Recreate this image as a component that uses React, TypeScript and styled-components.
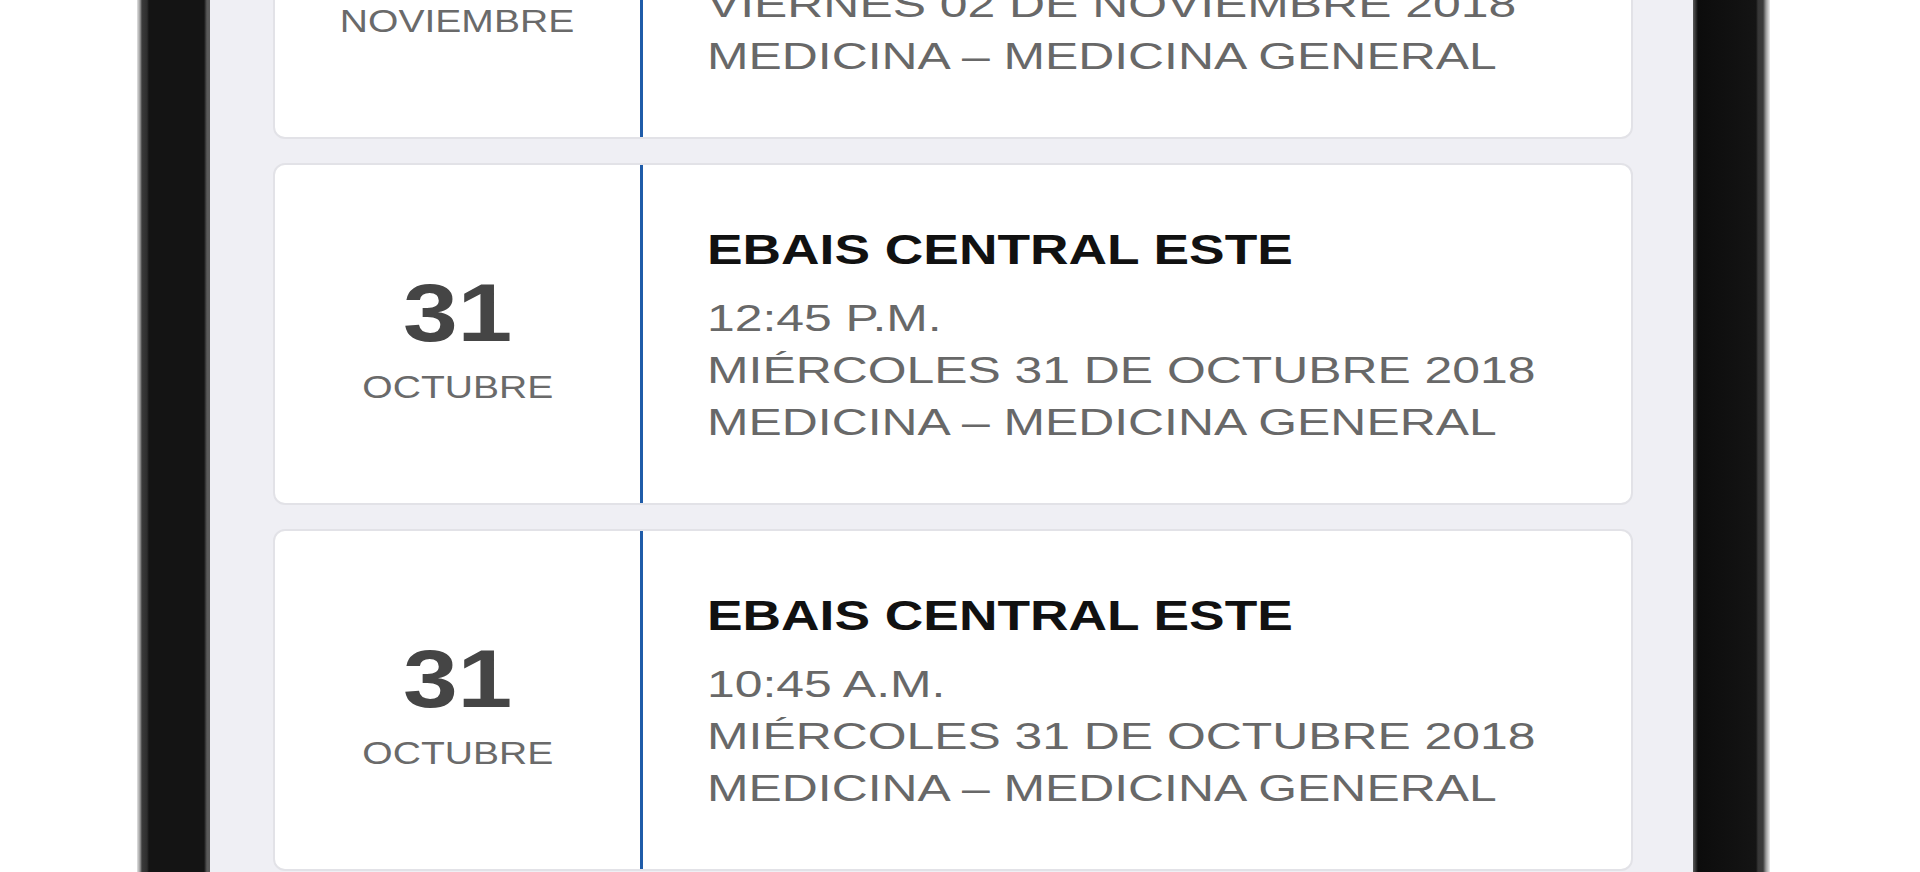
import React from 'react';
import styled, { createGlobalStyle } from 'styled-components';

const GlobalStyle = createGlobalStyle`
    html, body {
        margin: 0;
        padding: 0;
        background: #fff;
        overflow: hidden;
    }

    body {
        font-family: "Liberation Sans", Arial, sans-serif;
    }
`;

const Page = styled.div`
    height: 872px;
    overflow: hidden;
    padding-left: 137px;
    background: #fff;
`;

const Phone = styled.div`
    width: 1633px;
    height: 872px;
    box-sizing: border-box;
    display: flex;
    padding: 0 77px 0 73px;
    background: linear-gradient(to right,
        #e2e2e2 0, #9a9a9a 3px, #3a3a3a 5px, #2e2e2e 10px, #141414 12px,
        #141414 67px, #5a5a5a 70px, #5a5a5a 73px,
        #5a5a5a calc(100% - 77px), #0c0c0c calc(100% - 72px),
        #141414 calc(100% - 14px), #363636 calc(100% - 12px), #3a3a3a calc(100% - 7px),
        #9a9a9a calc(100% - 4px), #ececec 100%);
`;

const Screen = styled.div`
    flex: 1;
    background: #efeff4;
    padding: 0 60px 0 63px;
    overflow: hidden;
`;

const List = styled.div`
    display: flex;
    flex-direction: column;
    gap: 24px;
    margin-top: -203px;
`;

const Card = styled.div`
    flex: none;
    height: 342px;
    box-sizing: border-box;
    display: grid;
    grid-template-columns: 365px 1fr;
    background: #fff;
    border: 2px solid #e2e2e7;
    border-radius: 12px;
    overflow: hidden;
`;

const DateCol = styled.div`
    display: flex;
    flex-direction: column;
    align-items: center;
    justify-content: center;
    padding-top: 6px;
`;

const Day = styled.div`
    font-size: 82px;
    font-weight: 700;
    line-height: 82px;
    color: #454545;
    transform: scaleX(1.2);
`;

const Month = styled.div`
    margin-top: 18px;
    font-size: 31px;
    line-height: 31px;
    color: #6a6a6a;
    transform: scaleX(1.26);
`;

const Info = styled.div`
    display: flex;
    flex-direction: column;
    justify-content: center;
    padding: 9px 0 0 64px;
    border-left: 3px solid #1f5ca9;
`;

const Title = styled.div`
    margin-bottom: 22px;
    font-size: 42px;
    font-weight: 700;
    line-height: 42px;
    color: #111;
    white-space: nowrap;
    transform: scaleX(1.27);
    transform-origin: left center;
`;

const Line = styled.div`
    font-size: 36px;
    line-height: 52px;
    color: #686868;
    white-space: nowrap;
    transform: scaleX(1.385);
    transform-origin: left center;
`;

type Cita = {
    day: string;
    month: string;
    place: string;
    time: string;
    date: string;
    service: string;
};

const citas: Cita[] = [
    {
        day: '02',
        month: 'NOVIEMBRE',
        place: 'EBAIS CENTRAL ESTE',
        time: '08:00 A.M.',
        date: 'VIERNES 02 DE NOVIEMBRE 2018',
        service: 'MEDICINA – MEDICINA GENERAL',
    },
    {
        day: '31',
        month: 'OCTUBRE',
        place: 'EBAIS CENTRAL ESTE',
        time: '12:45 P.M.',
        date: 'MIÉRCOLES 31 DE OCTUBRE 2018',
        service: 'MEDICINA – MEDICINA GENERAL',
    },
    {
        day: '31',
        month: 'OCTUBRE',
        place: 'EBAIS CENTRAL ESTE',
        time: '10:45 A.M.',
        date: 'MIÉRCOLES 31 DE OCTUBRE 2018',
        service: 'MEDICINA – MEDICINA GENERAL',
    },
];

const App: React.FC = () => {
    return (
        <Page>
            <GlobalStyle />
            <Phone>
                <Screen>
                    <List>
                        {citas.map((c, i) => (
                            <Card key={i}>
                                <DateCol>
                                    <Day>{c.day}</Day>
                                    <Month>{c.month}</Month>
                                </DateCol>
                                <Info>
                                    <Title>{c.place}</Title>
                                    <Line>{c.time}</Line>
                                    <Line>{c.date}</Line>
                                    <Line>{c.service}</Line>
                                </Info>
                            </Card>
                        ))}
                    </List>
                </Screen>
            </Phone>
        </Page>
    );
};

export default App;
